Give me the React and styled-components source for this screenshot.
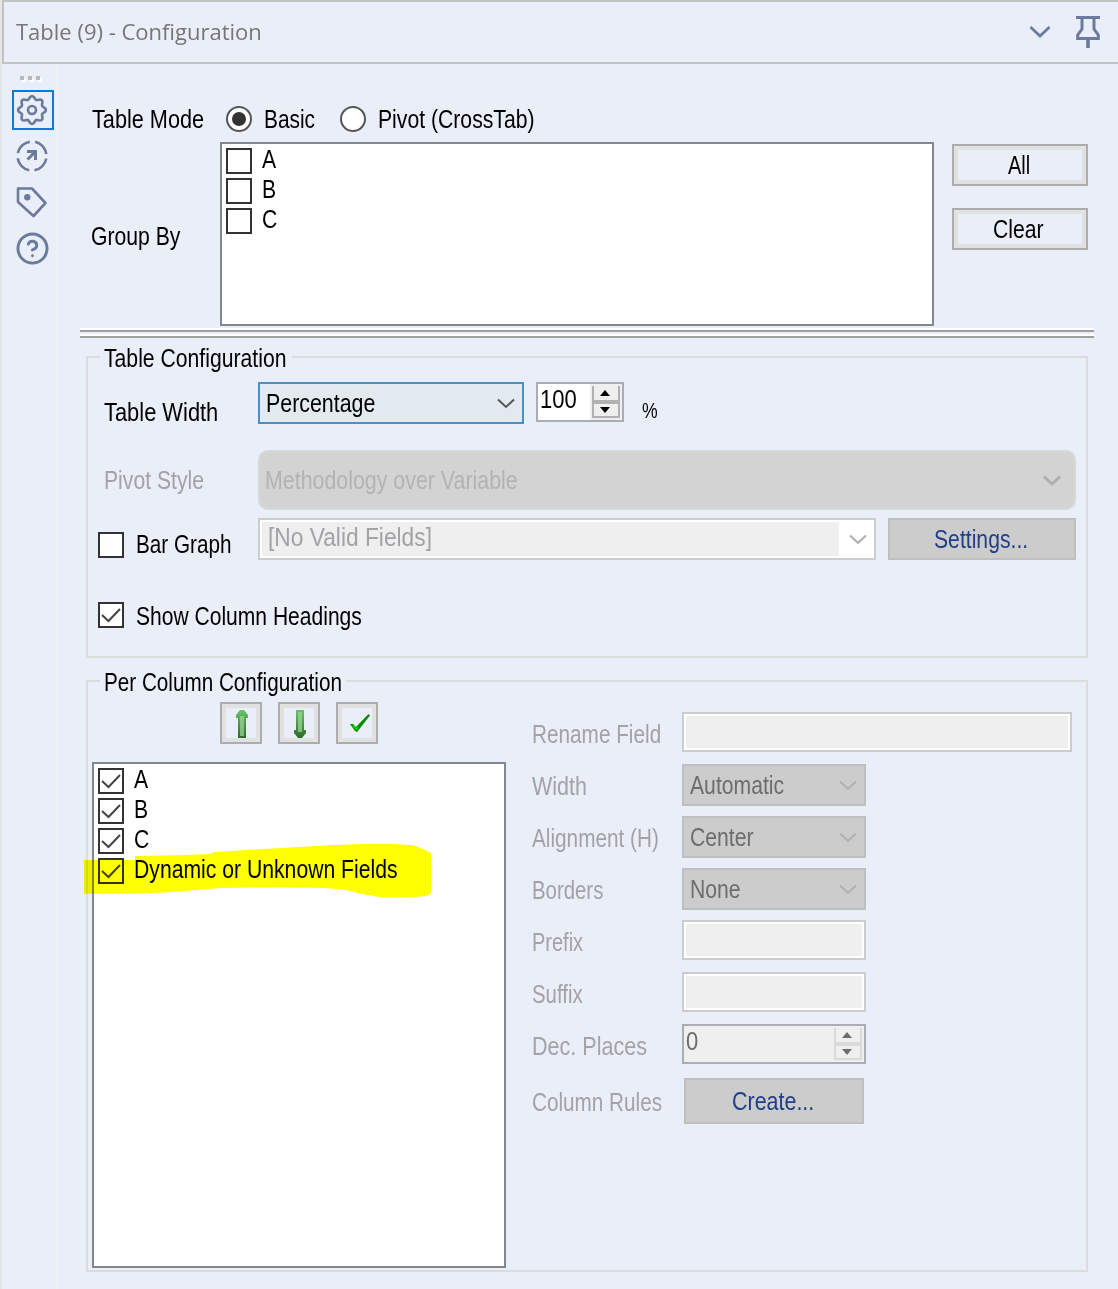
import React from 'react';
import styled, { createGlobalStyle } from 'styled-components';
import { CircleHelp } from 'lucide-react';

const GlobalStyle = createGlobalStyle`
  * {
    box-sizing: border-box;
  }

  body {
    margin: 0;
    background: #eaeef9;
    color: #000;
    font-family: "Liberation Sans", Arial, sans-serif;
    font-size: 25px;
    line-height: 30px;
  }
`;

const Window = styled.div`
  width: 1118px;
  height: 1289px;
  padding-left: 2px;
  background: #eaeef9;
  box-shadow: inset 2px 0 #e4e5e8;
  overflow: hidden;
`;

const TitleBar = styled.header`
  display: flex;
  align-items: center;
  height: 64px;
  padding: 0 18px 0 12px;
  border: 2px solid #c3c3c3;
  border-right: none;
`;

const Title = styled.h1`
  flex: 1;
  margin: -2px 0 0;
  color: #767676;
  font: 22px/30px "Open Sans", "Noto Sans", sans-serif;
`;

const TitleIcons = styled.div`
  display: flex;
  gap: 25px;
`;

const Body = styled.div`
  display: flex;
  height: 1225px;
`;

const ToolStrip = styled.nav`
  display: flex;
  flex-direction: column;
  align-items: center;
  width: 56px;
  padding: 12px 0 0 8px;
  border-right: 2px solid #eff1f6;
`;

const Grip = styled.div`
  display: flex;
  gap: 4px;
  margin: 0 6px 10px 0;
`;

const GripDot = styled.i`
  width: 4px;
  height: 4px;
  background: #b9b9bb;
  box-shadow: 2px 2px #fff;
`;

const Tool = styled.div`
  display: flex;
  align-items: center;
  justify-content: center;
  width: 42px;
  height: ${(p) => (p.$active ? '40px' : '46px')};
  margin-bottom: ${(p) => (p.$active ? '3px' : 0)};
  padding-right: 2px;
  border: ${(p) => (p.$active ? '2px solid #0a7bd8' : 'none')};
`;

const Main = styled.main`
  width: 1014px;
  margin-left: 22px;
`;

// Condensed face: $w is the drawn width, $s the horizontal squeeze
const Text = styled.span`
  display: block;
  width: ${(p) => (p.$w ? `${p.$w}px` : 'auto')};
  margin-top: ${(p) => p.$drop || 0}px;
  color: ${(p) => (p.$muted ? '#a2a2a7' : p.$color || '#000')};
  text-align: left;
  white-space: nowrap;
  transform: scaleX(${(p) => p.$s || 0.847});
  transform-origin: 0 50%;
`;

const PercentSign = styled(Text)`
  font-size: 22px;
`;

const ModeRow = styled.div`
  display: flex;
  align-items: center;
  height: 78px;
  padding: 32px 0 0 12px;
`;

const Radio = styled.span`
  display: flex;
  align-items: center;
  justify-content: center;
  width: 26px;
  height: 26px;
  margin: 0 12px 0 ${(p) => p.$gap}px;
  border: 2px solid #555;
  border-radius: 50%;
  background: #fff;

  &::after {
    content: "";
    width: 14px;
    height: 14px;
    border-radius: 50%;
    background: ${(p) => (p.$on ? '#333' : 'transparent')};
  }
`;

const GroupByRow = styled.div`
  display: flex;
  height: 186px;
`;

const GroupByLabel = styled.div`
  width: 140px;
  padding: 79px 0 0 11px;
`;

const ListBox = styled.div`
  position: relative;
  width: ${(p) => p.$w}px;
  height: ${(p) => p.$h}px;
  padding: 4px;
  border: 2px solid #838791;
  background: #fff;
`;

const ListItem = styled.div`
  display: flex;
  gap: 10px;
  height: 30px;

  ${Text} {
    margin-top: -4px;
  }
`;

const CheckBox = styled.span`
  flex: none;
  display: block;
  width: 26px;
  height: 26px;
  border: 2px solid #333;
  background: #fff;

  svg {
    display: block;
  }
`;

const ButtonColumn = styled.div`
  display: flex;
  flex-direction: column;
  gap: 22px;
  padding: 2px 0 0 18px;
`;

const Button = styled.button`
  display: flex;
  align-items: center;
  justify-content: center;
  width: ${(p) => p.$w}px;
  height: ${(p) => p.$h || 42}px;
  padding: 0 4px 0 0;
  border: 2px solid #adadad;
  background: #eaeef9;
  box-shadow: inset 0 0 0 4px #e1e1e1;
  font: inherit;

  &:disabled {
    padding-right: 2px;
    border-color: #bfbfbf;
    background: #ccc;
    box-shadow: none;
  }
`;

const IconButton = styled(Button)`
  width: 42px;
  padding: 2px 0 0 2px;
`;

const Splitter = styled.div`
  height: 10px;
  border-top: 2px solid #fff;
  border-bottom: 2px solid #a0a0a0;
  background: linear-gradient(#a0a0a0 2px, transparent 2px 4px, #fff 4px);
`;

const Group = styled.fieldset`
  width: 1002px;
  height: ${(p) => p.$h}px;
  min-width: 0;
  margin: ${(p) => p.$mt}px 0 0 6px;
  padding: 0;
  border: 2px solid #dcdcdc;
`;

const Legend = styled.legend`
  width: ${(p) => p.$w}px;
  height: 30px;
  margin-left: 12px;
  padding: 1px 0 0 4px;
`;

const FieldRow = styled.div`
  display: flex;
  align-items: flex-start;
  height: ${(p) => p.$h}px;
  margin-top: ${(p) => p.$mt}px;
`;

const FieldLabel = styled.div`
  display: flex;
  gap: 12px;
  width: 170px;
  padding: ${(p) => p.$top}px 0 0 ${(p) => p.$left || 16}px;
`;

const Trailing = styled.div`
  display: flex;
  gap: 18px;
  margin-left: ${(p) => p.$gap || 12}px;
`;

const Select = styled.div`
  display: flex;
  align-items: center;
  justify-content: space-between;
  width: ${(p) => p.$w}px;
  height: 42px;
  padding: 0 7px 0 6px;
  border: 2px solid ${(p) => (p.$focus ? '#4a90c5' : '#bfbfbf')};
  background: ${(p) => (p.$focus ? '#e2e9ef' : '#ccc')};
`;

const RoundSelect = styled(Select)`
  width: 818px;
  height: 60px;
  padding: 0 13px 0 5px;
  border-color: #d8d8d8;
  border-radius: 10px;
  background: #d3d3d3;
`;

const Combo = styled.div`
  display: flex;
  align-items: center;
  width: 618px;
  height: 42px;
  padding: 2px 7px 2px 2px;
  border: 2px solid #ccc;
  background: #fff;
`;

const ComboText = styled.div`
  flex: 1;
  height: 34px;
  margin-right: 10px;
  padding-left: 6px;
  background: #efefef;
`;

const TextBox = styled.div`
  width: ${(p) => p.$w}px;
  height: 40px;
  border: 2px solid #ccc;
  background: #efefef;
  box-shadow: inset 0 0 0 2px #fff;
`;

const Spinner = styled.div`
  display: flex;
  justify-content: space-between;
  width: ${(p) => p.$w}px;
  height: 40px;
  padding-left: 2px;
  border: 2px solid #abadb3;
  background: ${(p) => (p.$off ? '#efefef' : '#fff')};
`;

const SpinButtons = styled.div`
  width: 32px;
  padding: 2px 2px 0;
  background: #efefef;
`;

const SpinArrows = styled.div`
  display: flex;
  flex-direction: column;
  height: 32px;
  border: 2px solid ${(p) => (p.$off ? '#dadada' : '#b1b1b1')};
  border-top: none;
`;

const SpinArrow = styled.div`
  display: flex;
  align-items: center;
  justify-content: center;
  height: ${(p) => (p.$down ? 12 : 18)}px;
  padding-right: 2px;
  border-bottom: ${(p) => (p.$down ? 'none' : '4px solid')};
  border-color: ${(p) => (p.$off ? '#dadada' : '#b1b1b1')};
`;

const ArrowRow = styled.div`
  display: flex;
  gap: 16px;
  margin: 6px 0 18px 132px;
`;

const Columns = styled.div`
  display: flex;
  padding-left: 4px;
`;

const Form = styled.div`
  margin: -50px 0 0 26px;
`;

const FormRow = styled.div`
  display: flex;
  height: ${(p) => p.$h || 52}px;
`;

const FormLabel = styled.div`
  width: 150px;
  padding-top: ${(p) => p.$top || 7}px;
`;

const Marker = styled.svg`
  position: absolute;
  left: -10px;
  top: 79px;
  mix-blend-mode: multiply;
`;

const iconColor = '#6a7b9c';

const Chevron = ({ color = '#555', width = 2 }) => (
  <svg width="18" height="12" viewBox="0 0 18 12" fill="none">
    <path d="M1 2.5L9 10L17 2.5" stroke={color} strokeWidth={width} />
  </svg>
);

const Check = () => (
  <svg width="22" height="22" viewBox="0 0 22 22" fill="none">
    <path d="M2 11L8.5 17L20 5" stroke="#444" strokeWidth="2" />
  </svg>
);

const gearPath = () => {
  const points = [];
  for (let i = 0; i < 96; i++) {
    const a = (i / 96) * Math.PI * 2;
    const r = 12.4 + 1.5 * Math.cos(8 * a);
    points.push(`${(17 + r * Math.cos(a)).toFixed(2)} ${(17 + r * Math.sin(a)).toFixed(2)}`);
  }
  return `M${points.join('L')}Z`;
};

const GearIcon = () => (
  <svg width="34" height="34" viewBox="0 0 34 34" fill="none" stroke={iconColor} strokeWidth="2.6">
    <path d={gearPath()} />
    <circle cx="17" cy="17" r="4" />
  </svg>
);

const RunIcon = () => (
  <svg width="34" height="34" viewBox="0 0 34 34" fill="none" stroke={iconColor}>
    <circle cx="17" cy="17" r="14.5" strokeWidth="2.6" strokeDasharray="17.4 5.38" strokeDashoffset="-2.7" />
    <path d="M12 12.5H20.5V21M20 13L12.5 20.5" strokeWidth="3" />
  </svg>
);

const TagIcon = () => (
  <svg width="34" height="34" viewBox="0 0 34 34" fill="none">
    <path d="M3 3.5H17L30.5 18L18.5 31L3 17Z" stroke={iconColor} strokeWidth="2.6" strokeLinejoin="round" />
    <circle cx="12.3" cy="12.3" r="3.2" fill={iconColor} />
  </svg>
);

const PinIcon = () => (
  <svg width="24" height="32" viewBox="0 0 24 32" fill="none" stroke={iconColor}>
    <path d="M0 1.5H24" strokeWidth="3" />
    <path d="M6 2V13L1.7 19V22.5H22.3V19L18 13V2" strokeWidth="3" />
    <path d="M12 22V32" strokeWidth="3.6" />
  </svg>
);

const Triangle = ({ down, off }) => (
  <svg width="12" height="6" viewBox="0 0 12 6">
    <path d={down ? 'M1 0H11L6 6Z' : 'M1 6H11L6 0Z'} fill={off ? '#6d6d6d' : '#000'} />
  </svg>
);

const GreenArrow = ({ down }) => (
  <svg width="12" height="28" viewBox="0 0 12 28">
    <defs>
      <linearGradient id={down ? 'gDown' : 'gUp'} x1="0" y1="0" x2="0" y2="1">
        <stop offset="0" stopColor="#6cc067" />
        <stop offset="1" stopColor="#2b6b2b" />
      </linearGradient>
    </defs>
    <path
      d={down ? 'M2 0H10V20H12V23L8 28H4L0 23V20H2Z' : 'M4 0H8L12 5V8H10V28H2V8H0V5Z'}
      fill={`url(#${down ? 'gDown' : 'gUp'})`}
    />
    <path d={down ? 'M4 2H8V22H4Z' : 'M4 6H8V26H4Z'} fill="#9ad394" opacity="0.75" />
  </svg>
);

const GreenCheck = () => (
  <svg width="24" height="20" viewBox="-4 0 24 20">
    <path d="M0 10H3L6 13L18.5 0L20 1.5L7 18L5 17Z" fill="#008a00" />
    <path d="M2 11H3.5L6.5 14L9 12L7 16L5 15Z" fill="#00e000" />
  </svg>
);

const Spin = ({ value, w, off }) => (
  <Spinner $w={w} $off={off}>
    <Text $color={off ? '#6d6d6d' : '#000'} $w={36} $s={0.88}>{value}</Text>
    <SpinButtons>
      <SpinArrows $off={off}>
        <SpinArrow $off={off}><Triangle off={off} /></SpinArrow>
        <SpinArrow $off={off} $down><Triangle down off={off} /></SpinArrow>
      </SpinArrows>
    </SpinButtons>
  </Spinner>
);

const groupFields = ['A', 'B', 'C'];
const columnFields = ['A', 'B', 'C', 'Dynamic or Unknown Fields'];

const formSelects = [
  { label: 'Width', value: 'Automatic', squeeze: 0.86 },
  { label: 'Alignment (H)', value: 'Center', squeeze: 0.83 },
  { label: 'Borders', value: 'None', squeeze: 0.815 },
];

const App = () => (
  <Window>
    <GlobalStyle />
    <TitleBar>
      <Title>Table (9) - Configuration</Title>
      <TitleIcons>
        <svg width="22" height="32" viewBox="0 0 22 32" fill="none">
          <path d="M1.5 11L11 20L20.5 11" stroke={iconColor} strokeWidth="2.8" />
        </svg>
        <PinIcon />
      </TitleIcons>
    </TitleBar>

    <Body>
      <ToolStrip>
        <Grip><GripDot /><GripDot /><GripDot /></Grip>
        <Tool $active><GearIcon /></Tool>
        <Tool><RunIcon /></Tool>
        <Tool><TagIcon /></Tool>
        <Tool><CircleHelp size={35} color={iconColor} strokeWidth={2} /></Tool>
      </ToolStrip>

      <Main>
        <ModeRow>
          <Text $w={112} $s={0.867}>Table Mode</Text>
          <Radio $on $gap={22} />
          <Text $w={51} $s={0.835}>Basic</Text>
          <Radio $gap={25} />
          <Text>Pivot (CrossTab)</Text>
        </ModeRow>

        <GroupByRow>
          <GroupByLabel><Text>Group By</Text></GroupByLabel>
          <ListBox $w={714} $h={184}>
            {groupFields.map((name) => (
              <ListItem key={name}>
                <CheckBox />
                <Text>{name}</Text>
              </ListItem>
            ))}
          </ListBox>
          <ButtonColumn>
            <Button $w={136}><Text $w={21} $s={0.8}>All</Text></Button>
            <Button $w={136}><Text $w={51}>Clear</Text></Button>
          </ButtonColumn>
        </GroupByRow>

        <Splitter />

        <Group $h={316} $mt={4}>
          <Legend $w={192}><Text $w={182}>Table Configuration</Text></Legend>
          <FieldRow $h={42} $mt={10}>
            <FieldLabel $top={15}><Text $s={0.875}>Table Width</Text></FieldLabel>
            <Select $w={266} $focus>
              <Text $w={110} $s={0.855}>Percentage</Text>
              <Chevron />
            </Select>
            <Trailing>
              <Spin value="100" w={88} />
              <PercentSign $drop={14} $s={0.8}>%</PercentSign>
            </Trailing>
          </FieldRow>
          <FieldRow $h={60} $mt={26}>
            <FieldLabel $top={15}><Text $muted>Pivot Style</Text></FieldLabel>
            <RoundSelect>
              <Text $w={252} $s={0.855} $color="#b3b3b3">Methodology over Variable</Text>
              <Chevron color="#b0b0b0" width={3} />
            </RoundSelect>
          </FieldRow>
          <FieldRow $h={42} $mt={8}>
            <FieldLabel $top={14} $left={10}>
              <CheckBox />
              <Text $drop={-3} $s={0.828}>Bar Graph</Text>
            </FieldLabel>
            <Combo>
              <ComboText><Text $muted $s={0.91}>[No Valid Fields]</Text></ComboText>
              <Chevron color="#adadad" />
            </Combo>
            <Trailing>
              <Button disabled $w={188}><Text $w={94} $color="#203f86">Settings...</Text></Button>
            </Trailing>
          </FieldRow>
          <FieldRow $h={28} $mt={42}>
            <FieldLabel $top={0} $left={10}>
              <CheckBox><Check /></CheckBox>
              <Text $drop={-1} $s={0.842}>Show Column Headings</Text>
            </FieldLabel>
          </FieldRow>
        </Group>

        <Group $h={606} $mt={8}>
          <Legend $w={246}><Text $w={237} $s={0.827}>Per Column Configuration</Text></Legend>
          <ArrowRow>
            <IconButton><GreenArrow /></IconButton>
            <IconButton><GreenArrow down /></IconButton>
            <IconButton><GreenCheck /></IconButton>
          </ArrowRow>
          <Columns>
            <ListBox $w={414} $h={506}>
              {columnFields.map((name) => (
                <ListItem key={name}>
                  <CheckBox><Check /></CheckBox>
                  <Text>{name}</Text>
                </ListItem>
              ))}
              <Marker width="348" height="55" viewBox="12 549 1044 165">
                <path
                  d="M12 600H165V588L300 586L390 582L400 577L500 570L620 563L750 556L850 552H940L1000 556L1030 567L1053 580V700L1040 708L1000 711H900L850 703L800 690L740 684L600 682L420 684L340 691L270 697L155 701H12Z"
                  fill="#ff0"
                />
              </Marker>
            </ListBox>
            <Form>
              <FormRow>
                <FormLabel><Text $muted $s={0.83}>Rename Field</Text></FormLabel>
                <TextBox $w={390} />
              </FormRow>
              {formSelects.map(({ label, value, squeeze }) => (
                <FormRow key={label}>
                  <FormLabel><Text $muted $s={squeeze}>{label}</Text></FormLabel>
                  <Select $w={184}>
                    <Text $w={93} $color="#6d6d6d">{value}</Text>
                    <Chevron color="#b0b0b0" />
                  </Select>
                </FormRow>
              ))}
              <FormRow>
                <FormLabel><Text $muted $s={0.8}>Prefix</Text></FormLabel>
                <TextBox $w={184} />
              </FormRow>
              <FormRow>
                <FormLabel><Text $muted $s={0.816}>Suffix</Text></FormLabel>
                <TextBox $w={184} />
              </FormRow>
              <FormRow $h={54}>
                <FormLabel><Text $muted $s={0.862}>Dec. Places</Text></FormLabel>
                <Spin value="0" w={184} off />
              </FormRow>
              <FormRow>
                <FormLabel $top={9}><Text $muted $s={0.828}>Column Rules</Text></FormLabel>
                <Trailing $gap={2}>
                  <Button disabled $w={180} $h={46}><Text $w={82} $s={0.858} $color="#203f86">Create...</Text></Button>
                </Trailing>
              </FormRow>
            </Form>
          </Columns>
        </Group>
      </Main>
    </Body>
  </Window>
);

export default App;
